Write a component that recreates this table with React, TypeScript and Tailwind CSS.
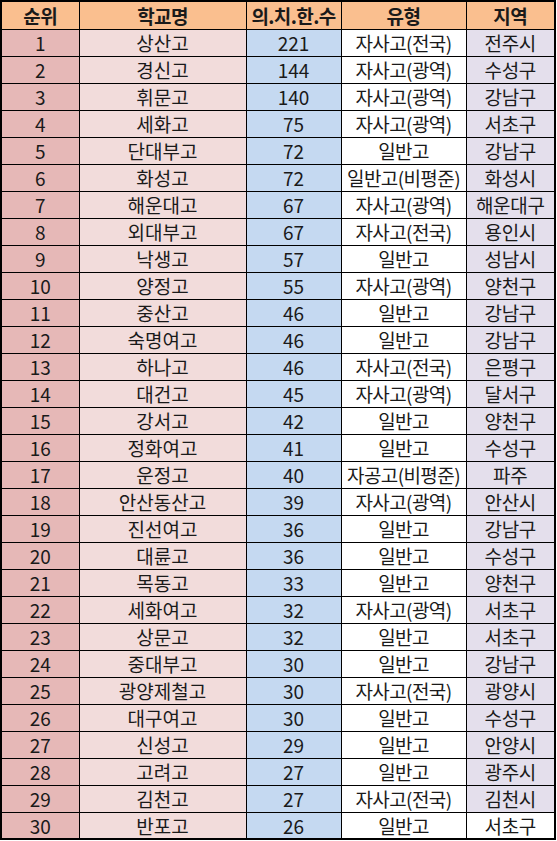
import React from 'react'

type Row = [number, string, number, string, string]

const ROWS: Row[] = [
  [1, '상산고', 221, '자사고(전국)', '전주시'],
  [2, '경신고', 144, '자사고(광역)', '수성구'],
  [3, '휘문고', 140, '자사고(광역)', '강남구'],
  [4, '세화고', 75, '자사고(광역)', '서초구'],
  [5, '단대부고', 72, '일반고', '강남구'],
  [6, '화성고', 72, '일반고(비평준)', '화성시'],
  [7, '해운대고', 67, '자사고(광역)', '해운대구'],
  [8, '외대부고', 67, '자사고(전국)', '용인시'],
  [9, '낙생고', 57, '일반고', '성남시'],
  [10, '양정고', 55, '자사고(광역)', '양천구'],
  [11, '중산고', 46, '일반고', '강남구'],
  [12, '숙명여고', 46, '일반고', '강남구'],
  [13, '하나고', 46, '자사고(전국)', '은평구'],
  [14, '대건고', 45, '자사고(광역)', '달서구'],
  [15, '강서고', 42, '일반고', '양천구'],
  [16, '정화여고', 41, '일반고', '수성구'],
  [17, '운정고', 40, '자공고(비평준)', '파주'],
  [18, '안산동산고', 39, '자사고(광역)', '안산시'],
  [19, '진선여고', 36, '일반고', '강남구'],
  [20, '대륜고', 36, '일반고', '수성구'],
  [21, '목동고', 33, '일반고', '양천구'],
  [22, '세화여고', 32, '자사고(광역)', '서초구'],
  [23, '상문고', 32, '일반고', '서초구'],
  [24, '중대부고', 30, '일반고', '강남구'],
  [25, '광양제철고', 30, '자사고(전국)', '광양시'],
  [26, '대구여고', 30, '일반고', '수성구'],
  [27, '신성고', 29, '일반고', '안양시'],
  [28, '고려고', 27, '일반고', '광주시'],
  [29, '김천고', 27, '자사고(전국)', '김천시'],
  [30, '반포고', 26, '일반고', '서초구'],
]

const HEADERS = ['순위', '학교명', '의.치.한.수', '유형', '지역']

export default function App() {
  return (
    <div
      className="w-[557px] h-[841px] bg-white overflow-hidden"
      style={{ fontFamily: '"Noto Sans CJK KR", "Noto Sans", sans-serif' }}
    >
      <table className="table-fixed border-collapse border-2 border-black text-[19px] leading-none text-[#1a1a1a] w-[556px]">
        <colgroup>
          <col className="w-[78px]" />
          <col className="w-[167px]" />
          <col className="w-[95px]" />
          <col className="w-[125px]" />
          <col className="w-[89px]" />
        </colgroup>
        <thead>
          <tr className="h-[28px] bg-[#fabf8f]">
            {HEADERS.map((h) => (
              <th
                key={h}
                className="border border-black font-bold text-center p-0 whitespace-nowrap tracking-[-0.6px]"
              >
                {h}
              </th>
            ))}
          </tr>
        </thead>
        <tbody>
          {ROWS.map(([rank, school, count, type, region], i) => (
            <tr key={rank} className="h-[27px]">
              <td className="border border-black bg-[#e6b8b7] text-center p-0">{rank}</td>
              <td className="border border-black bg-[#f2dcdb] text-center p-0">{school}</td>
              <td className="border border-black bg-[#c5d9f1] text-center p-0">{count}</td>
              <td className="border border-black bg-white text-center p-0 whitespace-nowrap tracking-[-0.6px]">
                {type}
              </td>
              <td
                className={`border border-black text-center p-0 whitespace-nowrap tracking-[-0.3px] ${
                  i === ROWS.length - 1 ? 'bg-white' : 'bg-[#e4dfec]'
                }`}
              >
                {region}
              </td>
            </tr>
          ))}
        </tbody>
      </table>
    </div>
  )
}
